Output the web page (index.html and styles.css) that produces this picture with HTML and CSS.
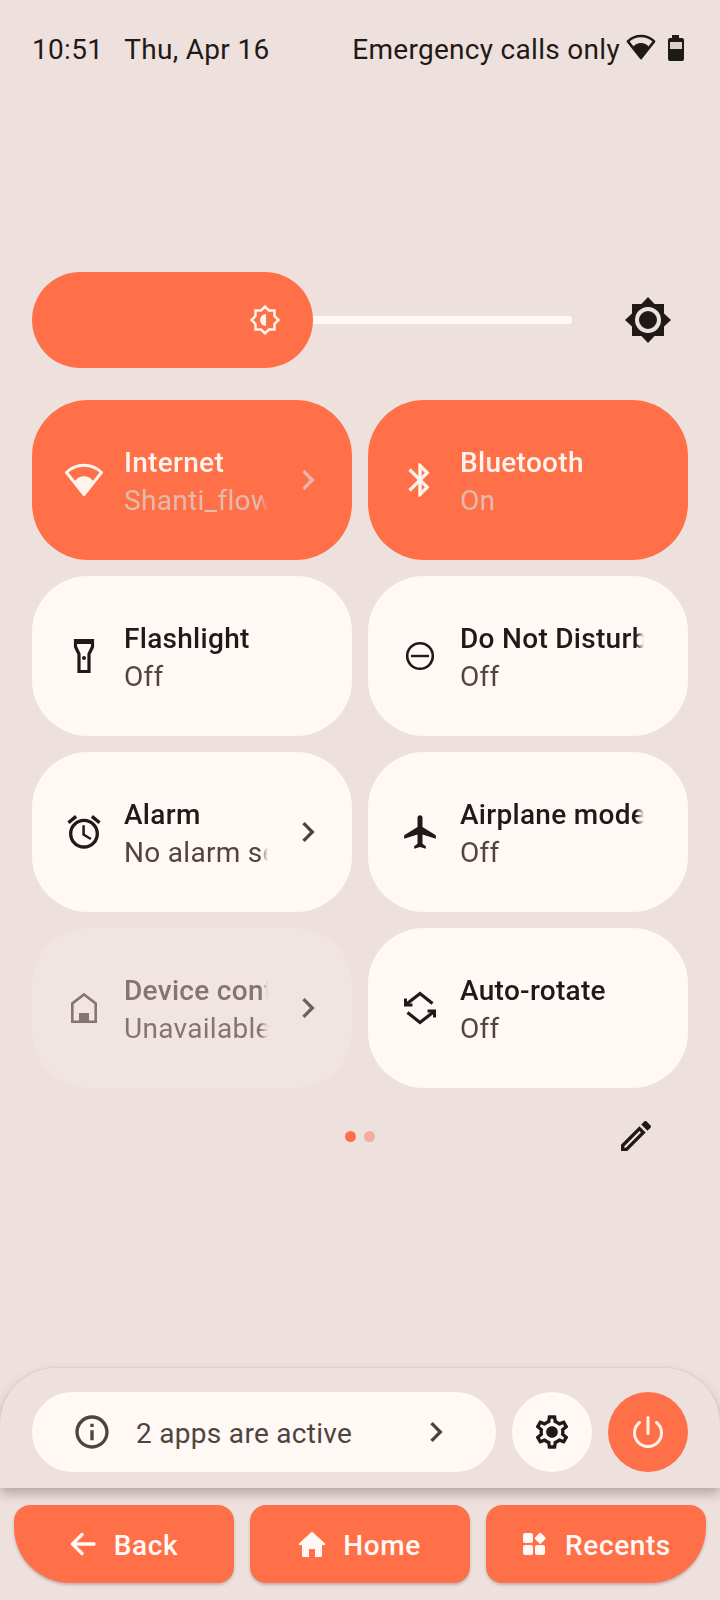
FILE: index.html
```html
<!DOCTYPE html>
<html lang="en">
<head>
<meta charset="utf-8">
<title>Quick settings</title>
<link rel="stylesheet" href="styles.css">
</head>
<body>
<div class="screen">
  <header class="status">
    <span class="clock">10:51</span>
    <span class="date">Thu, Apr 16</span>
    <span class="carrier">Emergency calls only</span>
    <svg class="st-wifi" viewBox="0 0 40 40"><path class="fan" d="M20 34.5 2.5 12.5A25 25 0 0 1 37.5 12.5Z"/><path class="fan-fill" d="M20 37 9.5 20A13 13 0 0 1 30.5 20Z"/></svg>
    <svg class="st-batt" viewBox="0 0 16 26"><path class="dark-fill" d="M4 0h7v3h3a2 2 0 0 1 2 2v19a2 2 0 0 1-2 2H2a2 2 0 0 1-2-2V5a2 2 0 0 1 2-2h2z"/><rect class="batt-win" x="2" y="7" width="12" height="7"/></svg>
  </header>

  <section class="brightness">
    <div class="track"></div>
    <div class="thumb">
      <svg class="thumb-icon" viewBox="0 0 30 30"><polygon class="thumb-star" points="28.4,15 24.5,18.9 24.5,24.5 18.9,24.5 15,28.4 11.1,24.5 5.5,24.5 5.5,18.9 1.6,15 5.5,11.1 5.5,5.5 11.1,5.5 15,1.6 18.9,5.5 24.5,5.5 24.5,11.1"/><path class="thumb-moon" d="M16 9A6 6 0 0 0 16 21Z"/></svg>
    </div>
    <svg class="auto-icon" viewBox="0 0 48 48"><polygon class="dark-fill" points="24,1 30.6,8 40,8 40,17.4 47,24 40,30.6 40,40 30.6,40 24,47 17.4,40 8,40 8,30.6 1,24 8,17.4 8,8 17.4,8"/><circle class="auto-ring" cx="24" cy="24" r="11"/></svg>
  </section>

  <section class="tiles">
    <div class="tile on">
      <svg class="ico" viewBox="0 0 40 40"><path class="fan thin" d="M20 34.5 2.5 12.5A25 25 0 0 1 37.5 12.5Z"/><path class="fan-fill" d="M20 36 11 21A11 11 0 0 1 29 21Z"/></svg>
      <div class="txt"><div class="t">Internet</div><div class="s">Shanti_flower</div></div>
      <svg class="chev" viewBox="0 0 24 24"><path d="M10 6 8.59 7.41 13.17 12l-4.58 4.59L10 18l6-6z"/></svg>
    </div>
    <div class="tile on">
      <svg class="ico" viewBox="0 0 24 24"><path d="M17.71 7.71 12 2h-1v7.59L6.41 5 5 6.41 10.59 12 5 17.59 6.41 19 11 14.41V22h1l5.71-5.71-4.3-4.29 4.3-4.29zM13 5.83l1.88 1.88L13 9.59V5.83zm1.88 10.46L13 18.17v-3.76l1.88 1.88z"/></svg>
      <div class="txt"><div class="t">Bluetooth</div><div class="s">On</div></div>
    </div>
    <div class="tile">
      <svg class="ico" viewBox="0 0 40 40"><path class="line thick" d="M11.500 4.500h17v6.300L25 18v17.500H15V18l-3.500-7.200Z"/><rect x="10" y="3" width="20" height="5"/><circle cx="20" cy="22" r="2"/></svg>
      <div class="txt"><div class="t">Flashlight</div><div class="s">Off</div></div>
    </div>
    <div class="tile">
      <svg class="ico" viewBox="0 0 40 40"><circle class="line" cx="20" cy="20" r="12.8"/><rect x="11" y="18.8" width="18" height="2.4"/></svg>
      <div class="txt"><div class="t">Do Not Disturb</div><div class="s">Off</div></div>
    </div>
    <div class="tile">
      <svg class="ico" viewBox="0 0 24 24"><path d="M22 5.72l-4.6-3.86-1.29 1.53 4.6 3.86L22 5.72zM7.88 3.39 6.6 1.86 2 5.71l1.29 1.53 4.59-3.85zM12.5 8H11v6l4.75 2.85.75-1.23-4-2.37V8zM12 4c-4.97 0-9 4.03-9 9s4.03 9 9 9 9-4.03 9-9-4.03-9-9-9zm0 16c-3.87 0-7-3.13-7-7s3.13-7 7-7 7 3.13 7 7-3.13 7-7 7z"/></svg>
      <div class="txt"><div class="t">Alarm</div><div class="s">No alarm set</div></div>
      <svg class="chev" viewBox="0 0 24 24"><path d="M10 6 8.59 7.41 13.17 12l-4.58 4.59L10 18l6-6z"/></svg>
    </div>
    <div class="tile">
      <svg class="ico" viewBox="-0.5 0 24 24"><path d="M21 16v-2l-8-5V3.5c0-.83-.67-1.5-1.5-1.5S10 2.67 10 3.5V9l-8 5v2l8-2.5V19l-2 1.5V22l3.5-1 3.5 1v-1.5L13 19v-5.5l8 2.5z"/></svg>
      <div class="txt"><div class="t">Airplane mode</div><div class="s">Off</div></div>
    </div>
    <div class="tile off">
      <svg class="ico" viewBox="0 0 40 40"><path class="line" d="M20 6.500 31.700 15.500V33.700H8.300V15.500Z"/><rect x="15" y="25" width="10" height="10"/></svg>
      <div class="txt"><div class="t">Device controls</div><div class="s">Unavailable</div></div>
      <svg class="chev" viewBox="0 0 24 24"><path d="M10 6 8.59 7.41 13.17 12l-4.58 4.59L10 18l6-6z"/></svg>
    </div>
    <div class="tile">
      <svg class="ico" viewBox="0 0 40 40"><path class="line thick" d="M6 16.500 20 5.500l12.500 10M34 23.500 20 34.500 7.500 24.500"/><path d="M4 15.500h8.500V18.500H4ZM4 10.500h3V18.500H4ZM27.500 21.500H36V24.500H27.500ZM33 21.500h3V29.500H33Z"/></svg>
      <div class="txt"><div class="t">Auto-rotate</div><div class="s">Off</div></div>
    </div>
  </section>

  <section class="pager">
    <div class="pager-gap"></div>
    <div class="dots"><span class="dot"></span><span class="dot dim"></span></div>
    <svg class="edit" viewBox="0 0 24 24"><path d="M14.06 9.02l.92.92L5.92 19H5v-.92l9.06-9.06M17.66 3c-.25 0-.51.1-.7.29l-1.83 1.83 3.75 3.75 1.83-1.83c.39-.39.39-1.02 0-1.41l-2.34-2.34c-.2-.2-.45-.29-.71-.29zm-3.6 3.19L3 17.25V21h3.75L17.81 9.94l-3.75-3.75z"/></svg>
  </section>

  <div class="spacer"></div>

  <section class="panel">
    <div class="pill">
      <svg class="pill-ico" viewBox="0 0 24 24"><path d="M11 7h2v2h-2zm0 4h2v6h-2zm1-9C6.48 2 2 6.48 2 12s4.48 10 10 10 10-4.48 10-10S17.52 2 12 2zm0 18c-4.41 0-8-3.59-8-8s3.59-8 8-8 8 3.59 8 8-3.59 8-8 8z"/></svg>
      <span class="pill-txt">2 apps are active</span>
      <svg class="pill-ico" viewBox="0 0 24 24"><path d="M10 6 8.590 7.410 13.170 12l-4.580 4.590L10 18l6-6z"/></svg>
    </div>
    <div class="round">
      <svg class="round-ico" viewBox="0 0 24 24"><path fill-rule="evenodd" d="M19.43 12.98c.04-.32.07-.64.07-.98 0-.34-.03-.66-.07-.98l2.11-1.65c.19-.15.24-.42.12-.64l-2-3.46c-.09-.16-.26-.25-.44-.25-.06 0-.12.01-.17.03l-2.49 1c-.52-.4-1.08-.73-1.69-.98l-.38-2.65C14.46 2.18 14.25 2 14 2h-4c-.25 0-.46.18-.49.42l-.38 2.65c-.61.25-1.17.59-1.69.98l-2.49-1c-.06-.02-.12-.03-.18-.03-.17 0-.34.09-.43.25l-2 3.46c-.13.22-.07.49.12.64l2.11 1.65c-.04.32-.07.65-.07.98 0 .33.03.66.07.98l-2.11 1.65c-.19.15-.24.42-.12.64l2 3.46c.09.16.26.25.44.25.06 0 .12-.01.17-.03l2.49-1c.52.4 1.08.73 1.69.98l.38 2.65c.03.24.24.42.49.42h4c.25 0 .46-.18.49-.42l.38-2.65c.61-.25 1.17-.59 1.69-.98l2.49 1c.06.02.12.03.18.03.17 0 .34-.09.43-.25l2-3.46c.12-.22.07-.49-.12-.64l-2.11-1.65zm-1.98-1.71c.04.31.05.52.05.73 0 .21-.02.43-.05.73l-.14 1.13.89.7 1.08.84-.7 1.21-1.27-.51-1.04-.42-.9.68c-.43.32-.84.56-1.25.73l-1.06.43-.16 1.13-.2 1.35h-1.4l-.19-1.35-.16-1.13-1.06-.43c-.43-.18-.83-.41-1.23-.71l-.91-.7-1.06.43-1.27.51-.7-1.21 1.08-.84.89-.7-.14-1.13c-.03-.31-.05-.54-.05-.74s.02-.43.05-.73l.14-1.13-.89-.7-1.08-.84.7-1.21 1.27.51 1.04.42.9-.68c.43-.32.84-.56 1.25-.73l1.06-.43.16-1.13.2-1.35h1.39l.19 1.35.16 1.13 1.06.43c.43.18.83.41 1.23.71l.91.7 1.06-.43 1.27-.51.7 1.21-1.07.85-.89.7.14 1.13zM12 8.500c-1.930 0-3.500 1.570-3.500 3.500s1.570 3.500 3.500 3.500 3.500-1.570 3.500-3.500-1.570-3.500-3.500-3.500z"/></svg>
    </div>
    <div class="round power">
      <svg class="round-ico" viewBox="0 0 40 40"><path class="power-line" d="M20 5.500V21.500M11.500 10.500A13.500 13.500 0 1 0 28.500 10.500"/></svg>
    </div>
  </section>

  <nav class="nav">
    <div class="btn back">
      <svg class="btn-ico" viewBox="0 0 32 32"><path class="btn-stroke" d="M27 16H6M15 6.500 5.500 16l9.500 9.500"/></svg>
      <span>Back</span>
    </div>
    <div class="btn">
      <svg class="btn-ico" viewBox="0 0 32 32"><path class="btn-fill" d="M16 3.500 3 15.500c-.6.700-.2 1.500.6 1.500H6v10.500c0 .8.600 1.500 1.500 1.500H13v-8h6v8h5.500c.9 0 1.500-.7 1.500-1.500V17h2.400c.8 0 1.200-.8.600-1.500Z"/></svg>
      <span>Home</span>
    </div>
    <div class="btn recents">
      <svg class="btn-ico" viewBox="0 0 32 32"><rect class="btn-fill" x="5" y="5" width="10" height="10" rx="2"/><rect class="btn-fill" x="5" y="17" width="10" height="10" rx="2"/><rect class="btn-fill" x="17" y="17" width="10" height="10" rx="2"/><rect class="btn-fill" x="18" y="6" width="8.500" height="8.500" rx="1.500" transform="rotate(45 22.200 10.200)"/></svg>
      <span>Recents</span>
    </div>
  </nav>
</div>
</body>
</html>
```
FILE: styles.css
```css
* { box-sizing: border-box; }
html, body { margin: 0; padding: 0; }
body {
  background: #eee0dd;
  color: #1f1a18;
  font-family: Roboto, "Liberation Sans", sans-serif;
}
svg { display: block; flex: none; fill: currentColor; }
.screen {
  width: 720px;
  height: 1600px;
  display: flex;
  flex-direction: column;
  overflow: hidden;
}

/* status bar */
.status {
  height: 98px;
  padding: 0 32px;
  display: flex;
  align-items: center;
  font-size: 28px;
  letter-spacing: 0.3px;
}
.date { margin-left: 21px; }
.carrier { margin-left: auto; }
.st-wifi { width: 30px; height: 30px; margin-left: 6px; margin-bottom: 4px; }
.st-batt { width: 16px; height: 26px; margin-left: 12px; margin-right: 4px; margin-bottom: 2px; }
.fan { fill: none; stroke: currentColor; stroke-width: 3.4; stroke-linejoin: round; }
.fan.thin { stroke-width: 3; }
.fan-fill { fill: currentColor; }
.dark-fill { fill: #1f1a18; }
.batt-win { fill: #d9cfcc; }

/* brightness */
.brightness {
  position: relative;
  margin-top: 174px;
  height: 96px;
  padding: 0 32px;
  display: flex;
  align-items: center;
  justify-content: space-between;
}
.track {
  position: absolute;
  left: 300px;
  width: 272px;
  height: 8px;
  border-radius: 4px;
  background: #fff8f5;
}
.thumb {
  position: relative;
  width: 281px;
  height: 96px;
  border-radius: 48px;
  background: #ff7048;
  display: flex;
  align-items: center;
  justify-content: flex-end;
  padding-right: 33px;
}
.thumb-icon { width: 30px; height: 30px; }
.thumb-star { fill: none; stroke: #fff3ee; stroke-width: 2.5; }
.thumb-moon { fill: #fff3ee; }
.auto-icon { width: 48px; height: 48px; margin-right: 16px; }
.auto-ring { fill: none; stroke: #eee0dd; stroke-width: 4; }

/* tiles */
.tiles {
  margin-top: 32px;
  padding: 0 32px;
  display: grid;
  grid-template-columns: 320px 320px;
  grid-auto-rows: 160px;
  gap: 16px;
}
.tile {
  border-radius: 56px;
  background: #fff8f5;
  padding: 0 24px 0 32px;
  display: flex;
  align-items: center;
  gap: 20px;
  color: #1f1a18;
}
.tile.on { background: #ff7048; color: #fff3ee; }
.tile.off { background: #f1e5e2; color: #85746f; }
.ico { width: 40px; height: 40px; }
.line { fill: none; stroke: currentColor; stroke-width: 2.6; }
.line.thick { stroke-width: 3.2; }
.chev { width: 40px; height: 40px; color: #4f4340; }
.on .chev { color: #e3bbad; }
.off .chev { color: #6f5f5a; }
.txt {
  flex: 1;
  min-width: 0;
  padding-top: 4px;
  overflow: hidden;
  white-space: nowrap;
  -webkit-mask-image: linear-gradient(to right, #000 calc(100% - 8px), transparent);
  mask-image: linear-gradient(to right, #000 calc(100% - 8px), transparent);
}
.txt:last-child { margin-right: 20px; }
.t { font-size: 28px; font-weight: 500; line-height: 38px; letter-spacing: 0.3px; }
.s { font-size: 28px; line-height: 38px; color: #524440; letter-spacing: 0.3px; }
.on .s { color: #e3bbad; }
.off .s { color: #85746f; }

/* pager */
.pager {
  height: 96px;
  display: grid;
  grid-template-columns: 1fr auto 1fr;
  align-items: center;
}
.dots { display: flex; gap: 8px; }
.dot { width: 11px; height: 11px; border-radius: 50%; background: #ff7048; }
.dot.dim { background: #f5ad9b; }
.edit { width: 40px; height: 40px; justify-self: end; margin-right: 64px; }

.spacer { flex: 1; }

/* bottom panel */
.panel {
  height: 120px;
  padding: 24px 32px;
  display: flex;
  gap: 16px;
  border-radius: 56px 56px 0 0;
  background: #eee1dd;
  box-shadow: 0 -1px 1px rgba(0,0,0,.05), 0 6px 12px rgba(0,0,0,.25);
  position: relative;
}
.pill {
  width: 464px;
  height: 80px;
  border-radius: 40px;
  background: #fff8f5;
  padding: 0 40px;
  display: flex;
  align-items: center;
  gap: 24px;
  color: #4f4340;
}
.pill-ico { width: 40px; height: 40px; }
.pill-txt { flex: 1; font-size: 28px; letter-spacing: 0.3px; padding-top: 2px; }
.round {
  width: 80px;
  height: 80px;
  border-radius: 50%;
  background: #fff8f5;
  display: flex;
  align-items: center;
  justify-content: center;
}
.round.power { background: #ff7048; }
.round-ico { width: 40px; height: 40px; }
.power-line { fill: none; stroke: #fff0ea; stroke-width: 3; stroke-linecap: round; }

/* nav */
.nav {
  height: 112px;
  padding: 17px 14px 0;
  display: flex;
  gap: 16px;
}
.btn {
  width: 220px;
  height: 78px;
  border-radius: 16px;
  background: #ff7048;
  color: #fff8f5;
  box-shadow: 0 2px 3px rgba(0,0,0,.2);
  padding-right: 3px;
  display: flex;
  align-items: center;
  justify-content: center;
  gap: 15px;
  font-size: 28px;
  font-weight: 500;
  letter-spacing: 0.6px;
}
.btn span { padding-top: 2px; }
.btn.back { border-bottom-left-radius: 56px; }
.btn.recents { border-bottom-right-radius: 56px; }
.btn-ico { width: 32px; height: 32px; }
.btn-stroke { fill: none; stroke: currentColor; stroke-width: 3.4; stroke-linecap: round; stroke-linejoin: round; }
.btn-fill { fill: currentColor; }
```
